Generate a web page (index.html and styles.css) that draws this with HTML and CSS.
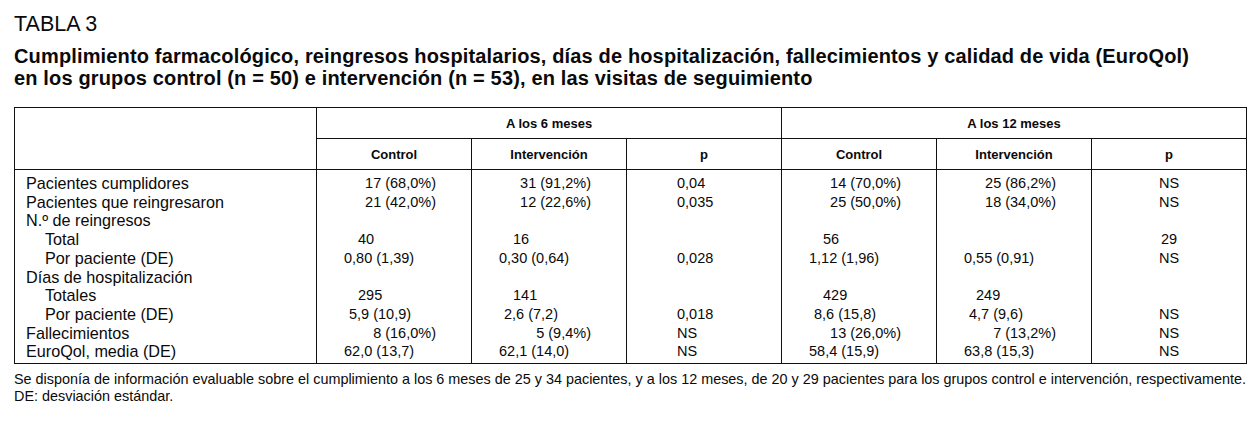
FILE: index.html
```html
<!DOCTYPE html>
<html lang="es">
<head>
<meta charset="utf-8">
<title>Tabla 3</title>
<link rel="stylesheet" href="styles.css">
</head>
<body>
<div class="page">
  <div class="label">TABLA 3</div>
  <h1 class="title">Cumplimiento farmacológico, reingresos hospitalarios, días de hospitalización, fallecimientos y calidad de vida (EuroQol)<br>en los grupos control (n = 50) e intervención (n = 53), en las visitas de seguimiento</h1>
  <table class="data">
    <colgroup>
      <col class="c-label">
      <col class="c-val"><col class="c-val"><col class="c-val">
      <col class="c-val"><col class="c-val"><col class="c-val">
    </colgroup>
    <thead>
      <tr class="h1">
        <th rowspan="2"></th>
        <th colspan="3">A los 6 meses</th>
        <th colspan="3">A los 12 meses</th>
      </tr>
      <tr class="h2">
        <th>Control</th><th>Intervención</th><th>p</th>
        <th>Control</th><th>Intervención</th><th>p</th>
      </tr>
    </thead>
    <tbody>
      <tr class="first">
        <td class="lab">Pacientes cumplidores</td>
        <td class="pct">17 (68,0%)</td><td class="pct">31 (91,2%)</td><td class="p6">0,04</td>
        <td class="pct">14 (70,0%)</td><td class="pct">25 (86,2%)</td><td class="p12">NS</td>
      </tr>
      <tr>
        <td class="lab">Pacientes que reingresaron</td>
        <td class="pct">21 (42,0%)</td><td class="pct">12 (22,6%)</td><td class="p6">0,035</td>
        <td class="pct">25 (50,0%)</td><td class="pct">18 (34,0%)</td><td class="p12">NS</td>
      </tr>
      <tr>
        <td class="lab">N.º de reingresos</td>
        <td></td><td></td><td></td><td></td><td></td><td></td>
      </tr>
      <tr>
        <td class="lab sub">Total</td>
        <td class="int">40</td><td class="int">16</td><td></td>
        <td class="int">56</td><td></td><td class="p12">29</td>
      </tr>
      <tr>
        <td class="lab sub">Por paciente (DE)</td>
        <td class="mean">0,80 (1,39)</td><td class="mean">0,30 (0,64)</td><td class="p6">0,028</td>
        <td class="mean">1,12 (1,96)</td><td class="mean">0,55 (0,91)</td><td class="p12">NS</td>
      </tr>
      <tr>
        <td class="lab">Días de hospitalización</td>
        <td></td><td></td><td></td><td></td><td></td><td></td>
      </tr>
      <tr>
        <td class="lab sub">Totales</td>
        <td class="int">295</td><td class="int">141</td><td></td>
        <td class="int">429</td><td class="int i2">249</td><td></td>
      </tr>
      <tr>
        <td class="lab sub">Por paciente (DE)</td>
        <td class="sd">5,9 (10,9)</td><td class="sd">2,6 (7,2)</td><td class="p6">0,018</td>
        <td class="sd">8,6 (15,8)</td><td class="sd">4,7 (9,6)</td><td class="p12">NS</td>
      </tr>
      <tr>
        <td class="lab">Fallecimientos</td>
        <td class="pct">8 (16,0%)</td><td class="pct">5 (9,4%)</td><td class="p6">NS</td>
        <td class="pct">13 (26,0%)</td><td class="pct">7 (13,2%)</td><td class="p12">NS</td>
      </tr>
      <tr class="last">
        <td class="lab">EuroQol, media (DE)</td>
        <td class="mean">62,0 (13,7)</td><td class="mean">62,1 (14,0)</td><td class="p6">NS</td>
        <td class="mean">58,4 (15,9)</td><td class="mean">63,8 (15,3)</td><td class="p12">NS</td>
      </tr>
    </tbody>
  </table>
  <p class="note">Se disponía de información evaluable sobre el cumplimiento a los 6 meses de 25 y 34 pacientes, y a los 12 meses, de 20 y 29 pacientes para los grupos control e intervención, respectivamente.<br>DE: desviación estándar.</p>
</div>
</body>
</html>
```

FILE: styles.css
```css
html, body {
  margin: 0;
  padding: 0;
  background: #ffffff;
}

body {
  font-family: "Liberation Sans", Arial, sans-serif;
  color: #0a0a0a;
}

.page {
  padding: 12px 14px 0 14px;
  width: 1232px;
}

.label {
  font-size: 21.5px;
  line-height: 24px;
  font-weight: 400;
  letter-spacing: 0;
}

.title {
  margin: 9px 0 0 0;
  font-size: 20px;
  line-height: 22px;
  font-weight: 700;
  letter-spacing: 0.15px;
}

.data {
  margin-top: 18px;
  width: 1232px;
  border-collapse: collapse;
  table-layout: fixed;
  font-size: 14.5px;
  border: 1px solid #111111;
}

.c-label { width: 302px; }
.c-val { width: 155px; }

.data th {
  font-weight: 700;
  font-size: 13px;
  padding: 0;
  text-align: center;
  vertical-align: middle;
  border: 1px solid #111111;
}

.data tr.h1 th { height: 30px; }
.data tr.h2 th { height: 30px; }

.data td {
  padding: 0;
  height: 18.7px;
  line-height: 18.7px;
  border-left: 1px solid #111111;
  border-right: 1px solid #111111;
  white-space: nowrap;
  vertical-align: top;
}

.data tr.first td { padding-top: 4px; }
.data tr.last td { padding-bottom: 2px; }

.data td.lab { padding-left: 11px; font-size: 16.2px; }
.data td.lab.sub { padding-left: 30px; }

.data td.pct { text-align: right; padding-right: 35px; }
.data td.int { padding-left: 41px; }
.data td.int.i2 { padding-left: 39px; }
.data td.mean { padding-left: 27px; }
.data td.sd { padding-left: 32px; }
.data td.p6 { padding-left: 50px; }
.data td.p12 { text-align: center; }

.note {
  margin: 7px 0 0 0;
  font-size: 14.4px;
  line-height: 16.5px;
  white-space: nowrap;
}
```
